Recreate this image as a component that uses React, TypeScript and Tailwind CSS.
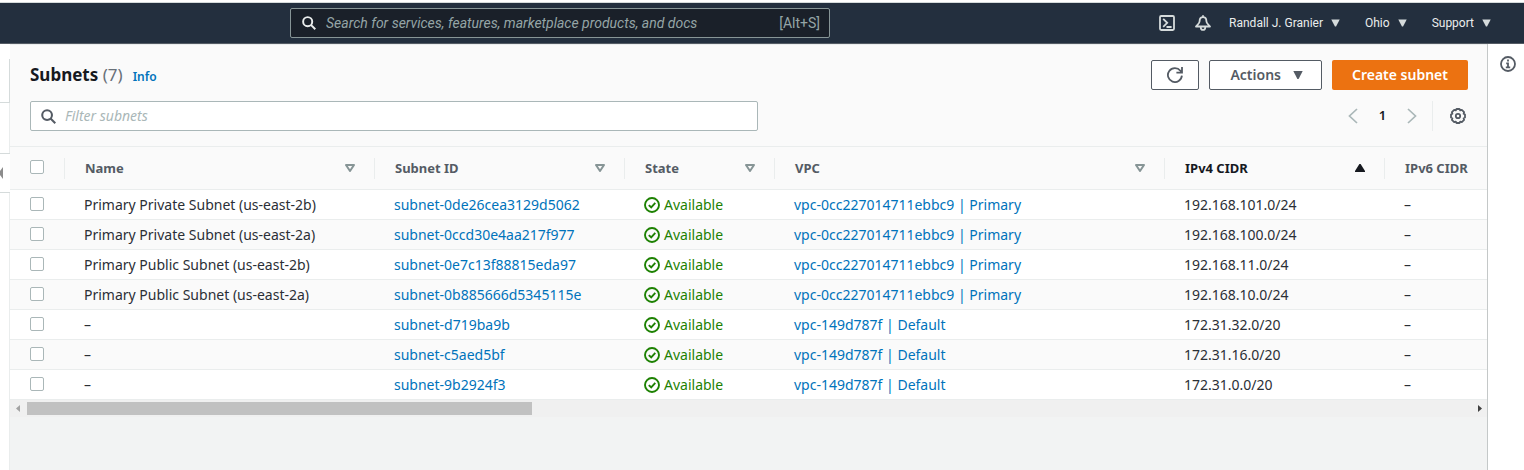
import React from "react";

type Subnet = { name: string; id: string; vpc: string; cidr: string };

const primaryVpc = "vpc-0cc227014711ebbc9 | Primary";
const defaultVpc = "vpc-149d787f | Default";

const subnets: Subnet[] = [
  { name: "Primary Private Subnet (us-east-2b)", id: "subnet-0de26cea3129d5062", vpc: primaryVpc, cidr: "192.168.101.0/24" },
  { name: "Primary Private Subnet (us-east-2a)", id: "subnet-0ccd30e4aa217f977", vpc: primaryVpc, cidr: "192.168.100.0/24" },
  { name: "Primary Public Subnet (us-east-2b)", id: "subnet-0e7c13f88815eda97", vpc: primaryVpc, cidr: "192.168.11.0/24" },
  { name: "Primary Public Subnet (us-east-2a)", id: "subnet-0b885666d5345115e", vpc: primaryVpc, cidr: "192.168.10.0/24" },
  { name: "–", id: "subnet-d719ba9b", vpc: defaultVpc, cidr: "172.31.32.0/20" },
  { name: "–", id: "subnet-c5aed5bf", vpc: defaultVpc, cidr: "172.31.16.0/20" },
  { name: "–", id: "subnet-9b2924f3", vpc: defaultVpc, cidr: "172.31.0.0/20" },
];

function SearchIcon({ className }: { className: string }) {
  return (
    <svg viewBox="0 0 16 16" className={className} fill="none" stroke="currentColor" strokeWidth="2.2" aria-hidden="true">
      <circle cx="6.5" cy="6.5" r="5.2" />
      <path d="M10.2 10.2 15.2 15.2" />
    </svg>
  );
}

function Caret({ className }: { className: string }) {
  return (
    <svg viewBox="0 0 10 8" className={className} fill="currentColor" aria-hidden="true">
      <path d="M0.3 0h9.4L5.6 8h-1.2z" />
    </svg>
  );
}

function NavMenu({ label }: { label: string }) {
  return (
    <button type="button" className="flex items-center gap-2 whitespace-nowrap text-xs text-[#eaeded]">
      {label}
      <Caret className="h-2 w-[9px] text-[#d5dbdb]" />
    </button>
  );
}

function TopBar() {
  return (
    <header className="flex h-[42px] items-center border-t border-b border-t-[#d5dbdb] border-b-[#545b64] bg-[#232f3e] pr-[33px] pl-[290px] font-[Roboto,sans-serif]">
      <label className="flex h-[30px] w-full max-w-[540px] items-center rounded-xs border border-[#879596] bg-[#1a2029] pr-[9px] pl-[11px]">
        <SearchIcon className="h-[14px] w-[14px] shrink-0 text-[#eaeded]" />
        <input
          type="search"
          aria-label="Search services"
          placeholder="Search for services, features, marketplace products, and docs"
          className="ml-[10px] min-w-0 flex-1 bg-transparent text-sm text-white outline-none placeholder:text-[#95a5a6] placeholder:italic"
        />
        <span className="text-sm text-[#95a5a6]">[Alt+S]</span>
      </label>
      <div className="ml-auto flex items-center">
        <button type="button" aria-label="CloudShell" className="mr-5 text-[#d5dbdb]">
          <svg viewBox="0 0 16 16" className="h-4 w-4" fill="none" stroke="currentColor" strokeWidth="1.8">
            <rect x="1" y="1" width="14" height="14" rx="1.2" />
            <path d="M4.2 3.8 8.2 7.8 4.2 11.8M7.500 12h5.100" />
          </svg>
        </button>
        <button type="button" aria-label="Notifications" className="mr-[18px] text-[#d5dbdb]">
          <svg viewBox="0 0 16 16" className="h-4 w-4" fill="none" stroke="currentColor" strokeWidth="1.8" strokeLinejoin="round">
            <path d="M8 .2v2M8 2.200C5.600 2.200 4.600 4 4.600 6.200 4.600 8.300 3 9.300 1 11.500h14c-2-2.200-3.600-3.200-3.600-5.300C11.400 4 10.400 2.200 8 2.200zM5.800 11.500v1.200a2.200 2.200 0 0 0 4.400 0v-1.200" />
          </svg>
        </button>
        <div className="flex items-center gap-[25px]">
          <NavMenu label="Randall J. Granier" />
          <NavMenu label="Ohio" />
          <NavMenu label="Support" />
        </div>
      </div>
    </header>
  );
}

function LeftRail() {
  return (
    <div className="flex w-[10px] shrink-0 flex-col bg-white pt-[15px]">
      <div className="h-11 border-r border-b border-[#d5dbdb]" />
      <div className="h-[50px] border-r border-[#eaeded]" />
      <button type="button" aria-label="Open navigation" className="flex h-10 items-center border-y border-[#d5dbdb]">
        <svg viewBox="0 0 4 12" className="h-3 w-1" fill="#8c8c8c">
          <path d="M3 0v12L0 8V4z" />
        </svg>
      </button>
      <div className="flex-1 border-r border-[#eaeded]" />
    </div>
  );
}

function PanelHeader() {
  return (
    <div className="border-t border-b border-[#eaeded] bg-[#fafafa] py-[15px] pr-[19px] pl-5">
      <div className="flex h-[30px] items-center">
        <h1 className="text-[17px] font-bold text-[#16191f]">
          Subnets <span className="font-normal text-[#687078]">(7)</span>
        </h1>
        <a href="#info" className="mt-1 ml-[10px] text-xs font-semibold text-[#0073bb]">Info</a>
        <div className="ml-auto flex gap-[10px]">
          <button type="button" aria-label="Refresh" className="flex h-[30px] w-12 items-center justify-center rounded-xs border border-[#545b64] bg-white text-[#545b64]">
            <svg viewBox="0 0 16 16" className="h-4 w-4" fill="none" stroke="currentColor" strokeWidth="1.8">
              <path d="M14.900 8.700A7 7 0 1 1 13.400 3.700l1.400 1.500M15 0v5.600H9.400" />
            </svg>
          </button>
          <button type="button" className="flex h-[30px] items-center gap-3 rounded-xs border border-[#545b64] bg-white pr-[18px] pl-5 text-sm font-semibold text-[#545b64]">
            Actions
            <Caret className="h-2 w-[10px]" />
          </button>
          <button type="button" className="h-[30px] rounded-xs bg-[#ec7211] px-5 text-sm font-semibold text-white">Create subnet</button>
        </div>
      </div>
      <div className="mt-[11px] flex h-[30px] items-center">
        <label className="flex h-[30px] w-full max-w-[728px] items-center rounded-xs border border-[#aab7b8] bg-white px-[10px]">
          <SearchIcon className="h-[15px] w-[15px] shrink-0 text-[#545b64]" />
          <input
            type="search"
            aria-label="Filter subnets"
            placeholder="Filter subnets"
            className="ml-[9px] min-w-0 flex-1 bg-transparent text-sm outline-none placeholder:text-[#aab7b8] placeholder:italic"
          />
        </label>
        <nav aria-label="Pages" className="ml-auto flex items-center text-[#aab7b8]">
          <button type="button" aria-label="Previous page">
            <svg viewBox="0 0 10 16" className="h-4 w-[10px]" fill="none" stroke="currentColor" strokeWidth="1.700"><path d="M9 1 1.500 8 9 15" /></svg>
          </button>
          <button type="button" className="w-[49px] text-[13px] font-semibold text-[#16191f]">1</button>
          <button type="button" aria-label="Next page">
            <svg viewBox="0 0 10 16" className="h-4 w-[10px]" fill="none" stroke="currentColor" strokeWidth="1.700"><path d="M1 1 8.500 8 1 15" /></svg>
          </button>
        </nav>
        <div className="ml-[15px] h-[30px] w-px bg-[#eaeded]" />
        <button type="button" aria-label="Preferences" className="mr-[2px] ml-[17px] text-[#545b64]">
          <svg viewBox="0 0 16 16" className="h-4 w-4" fill="none" stroke="currentColor" strokeLinejoin="round">
            <path strokeWidth="1.800" d="M6.500 1h3l.7 1.400 1.600-.5 2.300 2.300-.5 1.600 1.400.7v3l-1.400.7.5 1.600-2.300 2.300-1.600-.5-.7 1.400h-3l-.7-1.400-1.600.5-2.300-2.300.5-1.600L1 9.500v-3l1.400-.7-.5-1.600 2.300-2.300 1.600.5z" />
            <circle cx="8" cy="8" r="2.200" strokeWidth="1.800" />
          </svg>
        </button>
      </div>
    </div>
  );
}

function Checkbox({ label }: { label: string }) {
  return (
    <input
      type="checkbox"
      aria-label={label}
      className="ml-5 block h-[14px] w-[14px] appearance-none rounded-xs border border-[#aab7b8] bg-white checked:bg-[#0073bb]"
    />
  );
}

function Heading({ label, sort }: { label: string; sort?: "none" | "up" }) {
  return (
    <th scope="col" className="border-b border-[#eaeded] p-0 text-left">
      <button
        type="button"
        className={
          "flex h-[21px] w-full items-center justify-between border-r border-[#eaeded] pr-[19px] pl-5 text-[13px] font-bold whitespace-nowrap " +
          (sort === "up" ? "text-[#16191f]" : "text-[#545b64]")
        }
      >
        {label}
        {sort === "none" && (
          <svg viewBox="0 0 10 8" className="h-2 w-[10px]" fill="none" stroke="#879596" strokeWidth="2" strokeLinejoin="round" aria-hidden="true">
            <path d="M1 1h8L5 7z" />
          </svg>
        )}
        {sort === "up" && (
          <svg viewBox="0 0 10 8" className="h-2 w-[10px]" fill="#16191f" aria-hidden="true"><path d="M4.400 0h1.200L10 7v1H0V7z" /></svg>
        )}
      </button>
    </th>
  );
}

function StatusIcon() {
  return (
    <svg viewBox="0 0 16 16" className="h-4 w-4" fill="none" stroke="currentColor" strokeWidth="1.900" aria-hidden="true">
      <circle cx="8" cy="8" r="7" />
      <path d="M4.800 8.100 7.200 10.300 11.300 5.900" />
    </svg>
  );
}

function SubnetTable() {
  const cell = "border-b border-[#eaeded] py-0 pr-0 pl-[19px] whitespace-nowrap";
  return (
    <table className="w-full table-fixed border-separate border-spacing-0 text-sm text-[#2b2f36]">
      <colgroup>
        <col className="w-[55px]" />
        <col className="w-[310px]" />
        <col className="w-[250px]" />
        <col className="w-[150px]" />
        <col className="w-[390px]" />
        <col className="w-[220px]" />
        <col />
      </colgroup>
      <thead className="bg-[#fafafa]">
        <tr className="h-[43px]">
          <th scope="col" className="border-b border-[#eaeded] p-0">
            <div className="h-[21px] border-r border-[#eaeded] pt-[2px]"><Checkbox label="Select all subnets" /></div>
          </th>
          <Heading label="Name" sort="none" />
          <Heading label="Subnet ID" sort="none" />
          <Heading label="State" sort="none" />
          <Heading label="VPC" sort="none" />
          <Heading label="IPv4 CIDR" sort="up" />
          <th scope="col" className="border-b border-[#eaeded] p-0 pl-5 text-left text-[13px] font-bold whitespace-nowrap text-[#545b64]">IPv6 CIDR</th>
        </tr>
      </thead>
      <tbody>
        {subnets.map((s) => (
          <tr key={s.id} className="h-[30px] bg-white even:bg-[#fafafa]">
            <td className="border-b border-[#eaeded] p-0 pb-[2px]"><Checkbox label={"Select " + s.id} /></td>
            <td className={cell}>{s.name}</td>
            <td className={cell}><a href={"#" + s.id} className="text-[#0073bb]">{s.id}</a></td>
            <td className={cell}>
              <span className="flex items-center gap-1 text-[#1d8102]"><StatusIcon />Available</span>
            </td>
            <td className={cell}><a href="#vpc" className="text-[#0073bb]">{s.vpc}</a></td>
            <td className={cell}>{s.cidr}</td>
            <td className={cell}>–</td>
          </tr>
        ))}
      </tbody>
    </table>
  );
}

function ScrollTrack() {
  return (
    <div className="flex h-[17px] items-center bg-[#f0f0f0] pr-[5px] pl-[6px]" aria-hidden="true">
      <svg viewBox="0 0 4 7" className="h-[7px] w-1" fill="#a3a3a3"><path d="M4 0v7L0 3.500z" /></svg>
      <div className="flex-1 px-[7px]"><div className="h-[13px] w-[35%] bg-[#c1c1c1]" /></div>
      <svg viewBox="0 0 4 7" className="h-[7px] w-1" fill="#404040"><path d="M0 0v7l4-3.500z" /></svg>
    </div>
  );
}

export default function App() {
  return (
    <div className="flex min-h-screen flex-col bg-white pt-[2px] font-['Noto_Sans',sans-serif]">
      <TopBar />
      <div className="flex flex-1">
        <LeftRail />
        <main className="min-w-0 flex-1 bg-[#f2f3f3]">
          <PanelHeader />
          <SubnetTable />
          <ScrollTrack />
        </main>
        <aside className="w-[37px] shrink-0 border-l border-[#c4c8c8] bg-white pt-3 pl-3">
          <button type="button" aria-label="Open help panel" className="block text-[#545b64]">
            <svg viewBox="0 0 16 16" className="h-4 w-4" fill="none" stroke="currentColor" strokeWidth="1.800">
              <circle cx="8" cy="8" r="7" />
              <path d="M8 3.600v2M6.200 7.400H8v4M5.800 11.400h4.400" />
            </svg>
          </button>
        </aside>
      </div>
    </div>
  );
}
